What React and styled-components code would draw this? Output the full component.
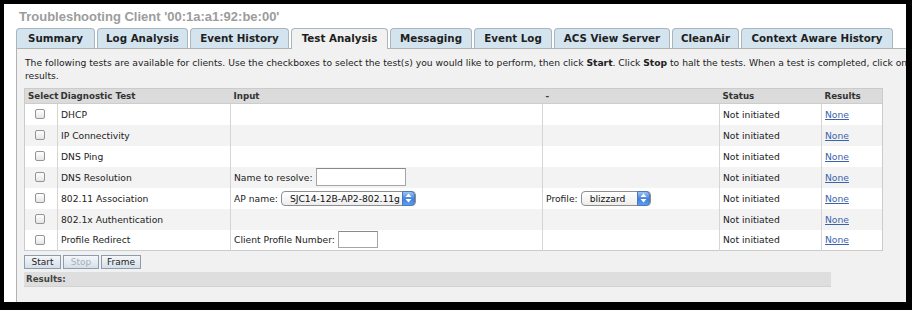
import React from "react";
import styled, { createGlobalStyle } from "styled-components";

const GlobalStyle = createGlobalStyle`
  html, body {
    margin: 0;
    padding: 0;
    background: #fff;
  }
  * {
    box-sizing: border-box;
  }
`;

const UI_FONT = `"DejaVu Sans", "Liberation Sans", sans-serif`;

const Frame = styled.div`
  width: 912px;
  height: 310px;
  border-style: solid;
  border-color: #000;
  border-width: 4px 6px 8px 4px;
  background: #fff;
  display: flex;
  flex-direction: column;
  padding: 5px 0 0 12px;
  overflow: hidden;
  font-family: ${UI_FONT};
  color: #222;
`;

const Title = styled.h1`
  margin: 0 0 4px 3px;
  font-family: "Liberation Sans", Arial, sans-serif;
  font-size: 13px;
  line-height: 15px;
  font-weight: bold;
  color: #9c9c9c;
`;

const TabRow = styled.div`
  display: flex;
  align-items: flex-end;
  gap: 2px;
  height: 20px;
  position: relative;
  z-index: 1;
`;

const Tab = styled.div`
  width: ${(p) => p.$w}px;
  height: ${(p) => (p.$active ? 21 : 20)}px;
  margin-bottom: ${(p) => (p.$active ? -1 : 0)}px;
  border: 1px solid #a9b5bf;
  border-bottom: none;
  border-radius: 4px 4px 0 0;
  background: ${(p) => (p.$active ? "#f1f1f1" : "#d4e4ef")};
  font-size: 10.3px;
  font-weight: bold;
  line-height: 18px;
  text-align: center;
  white-space: nowrap;
  color: #1e1e1e;
`;

const Panel = styled.div`
  flex: 1;
  background: #f1f1f1;
  border-top: 1px solid #b3b3b3;
  border-left: 1px solid #b3b3b3;
  padding: 7px 0 0 7px;
`;

const Intro = styled.p`
  margin: 0 0 6px 1px;
  font-size: 9.2px;
  line-height: 13px;
  white-space: nowrap;
  color: #222;

  b {
    font-weight: bold;
  }
`;

const Table = styled.table`
  width: 858px;
  border-collapse: collapse;
  border: 1px solid #cbcbcb;
  table-layout: fixed;
`;

const HeadCell = styled.th`
  width: ${(p) => p.$w}px;
  height: 15px;
  padding: 0 3px;
  background: #dbdbdb;
  border-bottom: 1px solid #cdcdcd;
  text-align: left;
  font-size: 8.7px;
  font-weight: bold;
  color: #333;
  white-space: nowrap;
`;

const Row = styled.tr`
  height: 21px;
  background: ${(p) => (p.$alt ? "#f3f3f3" : "#fff")};
`;

const Cell = styled.td`
  padding: 0 3px;
  font-size: 9.2px;
  color: #222;
  white-space: nowrap;
  border-left: 1px solid #d5d5d5;
  vertical-align: middle;

  &:first-child {
    border-left: none;
    padding-left: 10px;
  }
`;

const Field = styled.div`
  display: flex;
  align-items: center;
  gap: 3px;
`;

const Check = styled.input.attrs({ type: "checkbox" })`
  appearance: none;
  display: block;
  margin: 0;
  width: 10px;
  height: 10px;
  border: 1px solid #949494;
  border-radius: 2px;
  background: linear-gradient(#ffffff, #e6e6e6);
`;

const TextBox = styled.input.attrs({ type: "text" })`
  width: ${(p) => p.$w}px;
  height: ${(p) => p.$h}px;
  margin: 0;
  padding: 0 3px;
  border: 1px solid #a5a5a5;
  border-top-color: #8a8a8a;
  background: #fff;
  font-family: ${UI_FONT};
  font-size: 9px;
`;

const Popup = styled.div`
  position: relative;
  width: ${(p) => p.$w}px;
  height: 15px;
  border: 1px solid #8f8f8f;
  border-radius: 4px;
  background: linear-gradient(#ffffff, #ededed);
  padding-left: 8px;
  font-size: 9.2px;
  line-height: 13px;
  color: #111;
`;

const Stepper = styled.span`
  position: absolute;
  right: 0;
  top: -1px;
  width: 13px;
  height: 15px;
  border-radius: 0 4px 4px 0;
  background: linear-gradient(#9cc3f5, #3f7fe0 55%, #5f9cf0);
  border: 1px solid #4c79b8;
  display: flex;
  align-items: center;
  justify-content: center;
`;

const Status = styled.span`
  color: #222;
`;

const Link = styled.a`
  color: #3b62ad;
  text-decoration: underline;
`;

const ButtonRow = styled.div`
  display: flex;
  gap: 2px;
  margin-top: 4px;
`;

const Button = styled.button`
  width: ${(p) => p.$w}px;
  height: 14px;
  margin: 0;
  padding: 0;
  border: 1px solid #8d9db0;
  background: linear-gradient(#f4f7fa, #d5dfe9);
  font-family: ${UI_FONT};
  font-size: 9px;
  line-height: 12px;
  color: ${(p) => (p.disabled ? "#a8b0b8" : "#1e1e1e")};
`;

const ResultsBar = styled.div`
  width: 807px;
  height: 15px;
  margin-top: 3px;
  padding-left: 2px;
  background: #dedede;
  border-bottom: 1px solid #d2d2d2;
  font-size: 8.7px;
  font-weight: bold;
  line-height: 15px;
  color: #444;
`;

const Arrows = () => (
  <svg width="7" height="10" viewBox="0 0 7 10">
    <path d="M3.5 0.5 L6.5 4 L0.5 4 Z" fill="#fff" />
    <path d="M3.5 9.5 L6.5 6 L0.5 6 Z" fill="#fff" />
  </svg>
);

const tabs = [
  ["Summary", 79],
  ["Log Analysis", 91],
  ["Event History", 99],
  ["Test Analysis", 97],
  ["Messaging", 82],
  ["Event Log", 78],
  ["ACS View Server", 116],
  ["CleanAir", 67],
  ["Context Aware History", 152],
];

const tests = [
  { name: "DHCP" },
  { name: "IP Connectivity" },
  { name: "DNS Ping" },
  {
    name: "DNS Resolution",
    input: (
      <Field>
        Name to resolve: <TextBox $w={90} $h={18} />
      </Field>
    ),
  },
  {
    name: "802.11 Association",
    input: (
      <Field>
        AP name:
        <Popup $w={135}>
          SJC14-12B-AP2-802.11g
          <Stepper>
            <Arrows />
          </Stepper>
        </Popup>
      </Field>
    ),
    extra: (
      <Field>
        Profile:
        <Popup $w={70}>
          blizzard
          <Stepper>
            <Arrows />
          </Stepper>
        </Popup>
      </Field>
    ),
  },
  { name: "802.1x Authentication" },
  {
    name: "Profile Redirect",
    input: (
      <Field>
        Client Profile Number: <TextBox $w={40} $h={17} />
      </Field>
    ),
  },
];

export default function App() {
  return (
    <>
      <GlobalStyle />
      <Frame>
        <Title>Troubleshooting Client '00:1a:a1:92:be:00'</Title>
        <TabRow>
          {tabs.map(([label, w]) => (
            <Tab key={label} $w={w} $active={label === "Test Analysis"}>
              {label}
            </Tab>
          ))}
        </TabRow>
        <Panel>
          <Intro>
            The following tests are available for clients. Use the checkboxes
            to select the test(s) you would like to perform, then click{" "}
            <b>Start</b>. Click <b>Stop</b> to halt the tests. When a test is
            completed, click on
            <br />
            results.
          </Intro>
          <Table>
            <thead>
              <tr>
                <HeadCell $w={33}>Select</HeadCell>
                <HeadCell $w={173}>Diagnostic Test</HeadCell>
                <HeadCell $w={312}>Input</HeadCell>
                <HeadCell $w={177}>-</HeadCell>
                <HeadCell $w={102}>Status</HeadCell>
                <HeadCell $w={61}>Results</HeadCell>
              </tr>
            </thead>
            <tbody>
              {tests.map((t, i) => (
                <Row key={t.name} $alt={i % 2 === 1}>
                  <Cell>
                    <Check />
                  </Cell>
                  <Cell>{t.name}</Cell>
                  <Cell>{t.input}</Cell>
                  <Cell>{t.extra}</Cell>
                  <Cell>
                    <Status>Not initiated</Status>
                  </Cell>
                  <Cell>
                    <Link href="#">None</Link>
                  </Cell>
                </Row>
              ))}
            </tbody>
          </Table>
          <ButtonRow>
            <Button $w={37}>Start</Button>
            <Button $w={36} disabled>
              Stop
            </Button>
            <Button $w={40}>Frame</Button>
          </ButtonRow>
          <ResultsBar>Results:</ResultsBar>
        </Panel>
      </Frame>
    </>
  );
}
